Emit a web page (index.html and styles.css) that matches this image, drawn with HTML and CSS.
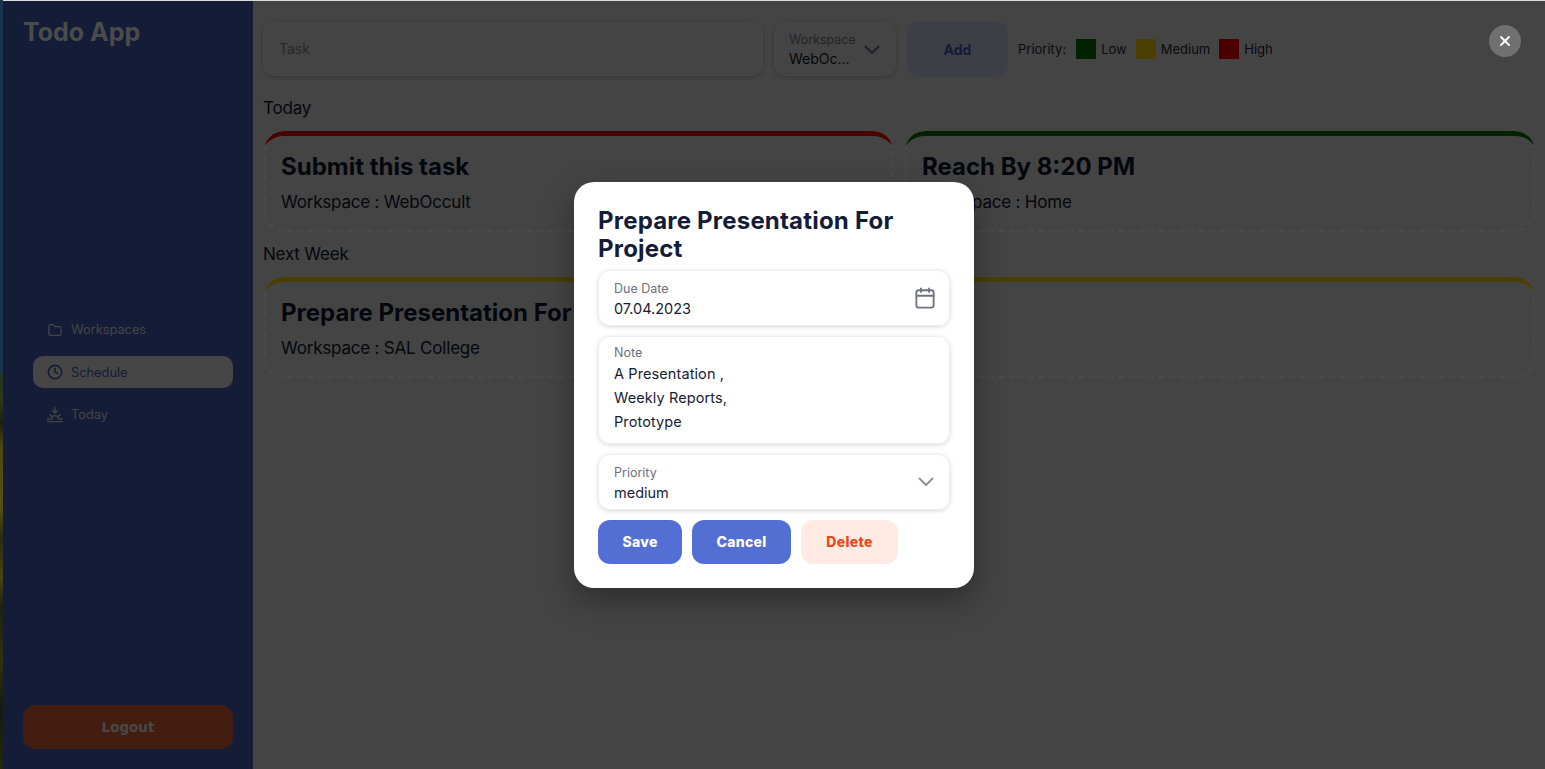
FILE: index.html
```html
<!DOCTYPE html>
<html lang="en">
  <head>
    <meta charset="UTF-8" />
    <meta name="viewport" content="width=device-width, initial-scale=1.0" />
    <title>Todo App</title>
    <link rel="stylesheet" href="styles.css">
  </head>
  <body>
    <div class="wallpaper"></div>
    <div class="app">
      <aside class="sidebar">
        <h1 class="logo">Todo App</h1>
        <nav class="nav">
          <a class="nav-item">
            <svg class="nav-icon" viewBox="0 0 24 24" fill="none" stroke="currentColor" stroke-width="2" stroke-linejoin="round" stroke-linecap="round"><path d="M3 6a2 2 0 0 1 2-2h4l3 3h7a2 2 0 0 1 2 2v9a2 2 0 0 1-2 2H5a2 2 0 0 1-2-2z"/></svg>
            Workspaces
          </a>
          <a class="nav-item active">
            <svg class="nav-icon" viewBox="0 0 24 24" fill="none" stroke="currentColor" stroke-width="2.4" stroke-linecap="round" stroke-linejoin="round"><circle cx="12" cy="12" r="10"/><path d="M12 6.500V12l3.500 2"/></svg>
            Schedule
          </a>
          <a class="nav-item">
            <svg class="nav-icon" viewBox="0 0 24 24" fill="none" stroke="currentColor" stroke-width="2" stroke-linecap="round" stroke-linejoin="round"><path d="M12 1v8M8.500 5.500 12 9l3.500-3.500M1 22h22M1 18h4M19 18h4M4.500 11.500l2.500 2.500M19.500 11.500 17 14M7 18a5 5 0 0 1 10 0"/></svg>
            Today
          </a>
        </nav>
        <button class="logout">Logout</button>
      </aside>

      <main class="main">
        <div class="toolbar">
          <div class="task-input">Task</div>
          <div class="workspace-select">
            <div>
              <div class="small-label">Workspace</div>
              <div class="select-value">WebOc...</div>
            </div>
            <svg class="chevron" viewBox="0 0 16 10" fill="none" stroke="currentColor" stroke-width="1.800" stroke-linecap="round" stroke-linejoin="round"><path d="M1.500 1.500 8 8l6.500-6.500"/></svg>
          </div>
          <button class="add-btn">Add</button>
          <div class="legend">
            <span class="legend-title">Priority:</span>
            <span class="swatch green"></span><span class="legend-name">Low</span>
            <span class="swatch yellow"></span><span class="legend-name">Medium</span>
            <span class="swatch red"></span><span class="legend-name">High</span>
          </div>
        </div>

        <h2 class="group-title">Today</h2>
        <div class="cards">
          <div class="card top-red">
            <h3>Submit this task</h3>
            <p>Workspace : WebOccult</p>
          </div>
          <div class="card top-green">
            <h3>Reach By 8:20 PM</h3>
            <p>Workspace : Home</p>
          </div>
        </div>

        <h2 class="group-title">Next Week</h2>
        <div class="cards one">
          <div class="card top-yellow">
            <h3>Prepare Presentation For Project</h3>
            <p>Workspace : SAL College</p>
          </div>
        </div>
      </main>

      <div class="overlay">
        <button class="close-btn" aria-label="Close">
          <svg viewBox="0 0 12 12" fill="none" stroke="currentColor" stroke-width="2" stroke-linecap="round"><path d="M2 2l8 8M10 2l-8 8"/></svg>
        </button>
        <div class="modal">
          <h2 class="modal-title">Prepare Presentation For Project</h2>
          <div class="field field-row">
            <div>
              <div class="small-label">Due Date</div>
              <div class="field-value">07.04.2023</div>
            </div>
            <svg class="calendar" viewBox="0 0 22 24" fill="none" stroke="currentColor" stroke-width="2" stroke-linecap="round" stroke-linejoin="round"><rect x="1.500" y="3.500" width="19" height="19" rx="2.500"/><path d="M1.500 9.500h19M6.500 1.500v4M15.500 1.500v4"/></svg>
          </div>
          <div class="field note">
            <div class="small-label">Note</div>
            <div class="note-text">A Presentation ,<br>Weekly Reports,<br>Prototype</div>
          </div>
          <div class="field field-row">
            <div>
              <div class="small-label">Priority</div>
              <div class="field-value">medium</div>
            </div>
            <svg class="chevron modal-chevron" viewBox="0 0 16 10" fill="none" stroke="currentColor" stroke-width="1.800" stroke-linecap="round" stroke-linejoin="round"><path d="M1.500 1.500 8 8l6.500-6.500"/></svg>
          </div>
          <div class="actions">
            <button class="btn btn-save">Save</button>
            <button class="btn btn-cancel">Cancel</button>
            <button class="btn btn-delete">Delete</button>
          </div>
        </div>
      </div>
    </div>
  </body>
</html>
```

FILE: styles.css
```css
* {
  box-sizing: border-box;
}

html, body {
  height: 100%;
}

body {
  margin: 0;
  display: flex;
  overflow: hidden;
  padding-top: 1px;
  background-color: #dcdcdc;
  font-family: "Inter", "Noto Sans", sans-serif;
  color: #0f152a;
}

.wallpaper {
  width: 3px;
  flex: none;
  margin-top: -1px;
  background-image: linear-gradient(#1a3550 0, #1a3550 48%, #23331f 49%, #2f3818 52%, #1c2014 55%, #4d4714 58%, #575012 66%, #2a2a14 70%, #4a4416 75%, #1c2014 79%, #2e3312 86%, #161a10 92%, #23280f 100%);
}

.app {
  position: relative;
  flex: 1;
  display: flex;
  min-width: 0;
  background-color: #c2c2c2;
}

.sidebar {
  width: 250px;
  flex: none;
  position: relative;
  display: flex;
  flex-direction: column;
  justify-content: center;
  padding: 0 20px 26px;
  background-color: #39509d;
}

.logo {
  position: absolute;
  top: 15px;
  left: 20px;
  margin: 0;
  font-size: 25px;
  line-height: 32px;
  font-weight: 700;
  color: #d8d8d8;
}

.nav {
  display: flex;
  flex-direction: column;
  gap: 10.500px;
  padding-left: 10px;
}

.nav-item {
  display: flex;
  align-items: center;
  gap: 8px;
  height: 32px;
  padding-left: 14px;
  border-radius: 10px;
  font-size: 12.800px;
  color: #c4c4c4;
}

.nav-item.active {
  background-color: #c9c9c9;
  color: #39509d;
}

.nav-icon {
  width: 16px;
  height: 16px;
  flex: none;
}

.logout {
  position: absolute;
  left: 20px;
  bottom: 20px;
  width: 210px;
  height: 44px;
  border: none;
  border-radius: 12px;
  background-color: #bd532e;
  color: #cccccc;
  font-family: "DejaVu Sans", sans-serif;
  font-size: 13.500px;
  font-weight: 700;
}

.main {
  flex: 1;
  min-width: 0;
  padding: 20px 10px 0 10px;
}

.toolbar {
  display: flex;
  align-items: center;
  height: 56px;
}

.task-input {
  width: 500px;
  height: 54px;
  padding: 0 0 1px 15px;
  display: flex;
  align-items: center;
  border: 1px solid #cbcbce;
  border-radius: 12px;
  box-shadow: 0 1px 4px rgba(20, 28, 55, 0.25);
  font-size: 14px;
  color: #72727c;
}

.workspace-select {
  width: 122px;
  height: 54px;
  margin-left: 11px;
  padding: 1px 15px 0 14px;
  display: flex;
  align-items: center;
  justify-content: space-between;
  border: 1px solid #cbcbce;
  border-radius: 12px;
  box-shadow: 0 1px 4px rgba(20, 28, 55, 0.25);
}

.small-label {
  font-size: 12.500px;
  line-height: 16px;
  color: #6c6f80;
}

.workspace-select .small-label {
  margin-top: 1px;
  color: #6a6a74;
}

.select-value {
  margin-top: 1px;
  font-size: 14px;
  line-height: 20px;
  color: #0f152a;
}

.chevron {
  width: 16px;
  height: 10px;
  flex: none;
  color: #5a5c68;
}

.add-btn {
  width: 101px;
  height: 56px;
  margin-left: 11px;
  border: none;
  border-radius: 12px;
  background-color: #b0b6cc;
  color: #39509d;
  font-family: "Inter", sans-serif;
  font-size: 14px;
  font-weight: 700;
}

.legend {
  display: flex;
  align-items: center;
  margin-left: 10px;
  font-size: 13px;
  color: #202230;
}

.legend-title {
  margin-right: 10px;
}

.legend-name {
  margin-left: 5px;
  margin-right: 9px;
}

.swatch {
  width: 20px;
  height: 20px;
}

.green { background-color: #006100; }
.yellow { background-color: #d4b400; }
.red { background-color: #d60000; }

.group-title {
  margin: 0;
  padding-top: 20px;
  font-size: 17px;
  line-height: 22px;
  font-weight: 400;
  letter-spacing: -0.2px;
  color: #0f152a;
}

.cards + .group-title {
  padding-top: 11px;
}

.group-title + .cards {
  margin-top: 12px;
}

.cards {
  display: grid;
  grid-template-columns: 629px 630px;
  gap: 12px;
  padding-left: 1px;
}

.cards.one {
  grid-template-columns: 1271px;
}

.card {
  position: relative;
  height: 101px;
  padding: 20px 15px 0 15px;
  border: 2px dashed #d4d4d4;
  border-top: none;
  border-radius: 20px;
}

.card::before {
  content: "";
  position: absolute;
  top: 0;
  left: -2px;
  right: -2px;
  height: 22px;
  border-top: 5px solid;
  border-radius: 20px 20px 0 0;
  -webkit-mask-image: linear-gradient(#000, #000 14px, transparent 14px);
}

.top-red::before { border-color: #d60000; }
.top-green::before { border-color: #006100; }
.top-yellow::before { border-color: #d4b400; }

.card h3 {
  margin: 0;
  font-size: 24px;
  line-height: 32px;
  font-weight: 700;
  color: #0f152a;
}

.card p {
  margin: 7px 0 0;
  font-size: 17px;
  line-height: 24px;
  letter-spacing: -0.2px;
  color: #0f152a;
}

.overlay {
  position: absolute;
  inset: 0;
  display: flex;
  align-items: center;
  justify-content: center;
  background-color: rgba(0, 0, 0, 0.65);
}

.close-btn {
  position: absolute;
  top: 24px;
  right: 24px;
  width: 32px;
  height: 32px;
  padding: 0;
  display: flex;
  align-items: center;
  justify-content: center;
  border: none;
  border-radius: 50%;
  background-color: #707070;
  color: #fff;
}

.close-btn svg {
  width: 12px;
  height: 12px;
}

.modal {
  width: 400px;
  height: 406px;
  padding: 25px 24px 24px;
  background-color: #fff;
  border-radius: 20px;
  box-shadow: 0 12px 32px rgba(0, 0, 0, 0.35);
}

.modal-title {
  margin: 0 0 7px;
  font-size: 24px;
  line-height: 28px;
  font-weight: 700;
  letter-spacing: 0.2px;
  color: #141c37;
}

.field {
  width: 352px;
  margin-bottom: 10px;
  padding: 9px 15px 0;
  border: 1px solid #eeeef0;
  border-radius: 12px;
  box-shadow: 0 1px 4px rgba(20, 28, 55, 0.18);
}

.field-row {
  height: 56px;
  display: flex;
  align-items: center;
  justify-content: space-between;
  padding-top: 2px;
}

.field-row .small-label {
  margin-top: 1px;
}

.field-value {
  margin-top: 2px;
  font-size: 14.500px;
  line-height: 20px;
  color: #141c37;
}

.note {
  height: 108px;
  padding-top: 8px;
}

.note-text {
  padding-top: 1px;
  font-size: 14.500px;
  line-height: 24px;
  letter-spacing: 0.1px;
  color: #141c37;
}

.calendar {
  width: 20px;
  height: 22px;
  margin-right: -1px;
  margin-top: -2px;
  color: #70727f;
}

.modal-chevron {
  margin-top: -2px;
  color: #8a8c97;
}

.actions {
  display: flex;
  gap: 10px;
}

.btn {
  height: 44px;
  padding-bottom: 2px;
  border: none;
  border-radius: 12px;
  font-family: "Inter", sans-serif;
  font-size: 14px;
  font-weight: 800;
  letter-spacing: 0.3px;
}

.btn-save {
  width: 84px;
  background-color: #536fd4;
  color: #fff;
}

.btn-cancel {
  width: 99px;
  background-color: #536fd4;
  color: #fff;
}

.btn-delete {
  width: 97px;
  background-color: #ffebe4;
  color: #e9481a;
}
```
